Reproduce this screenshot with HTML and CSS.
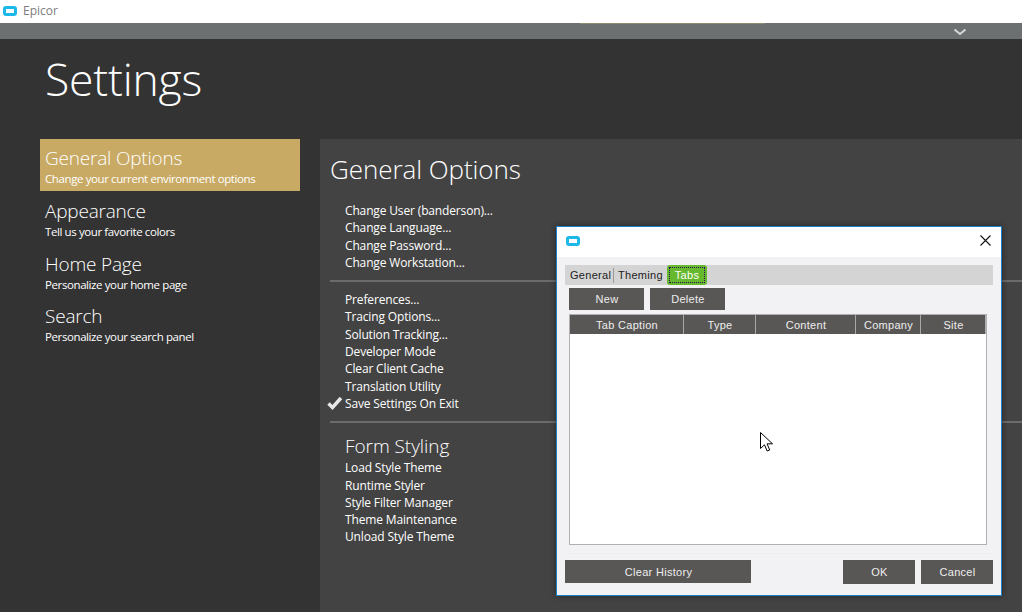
FILE: index.html
```html
<!DOCTYPE html>
<html lang="en">
<head>
<meta charset="utf-8">
<title>Epicor</title>
<link rel="stylesheet" href="styles.css">
</head>
<body>
<div class="titlebar">
  <svg class="app-icon" width="14" height="10" viewBox="0 0 14 10"><rect x="1.5" y="1.5" width="11" height="7" rx="1.5" fill="#fff" stroke="#1cb8ea" stroke-width="3"/></svg>
  <span class="app-name">Epicor</span>
</div>
<div class="ribbon">
  <div class="ribbon-accent"></div>
  <svg class="chevron" width="14" height="8" viewBox="0 0 14 8"><path d="M1.5 1.5 7 6l5.5-4.5" fill="none" stroke="#d6d8d8" stroke-width="2"/></svg>
</div>
<div class="page">
  <h1 class="page-title">Settings</h1>
  <div class="columns">
    <nav class="sidebar">
      <div class="nav-item active"><div class="nav-title">General Options</div><div class="nav-sub">Change your current environment options</div></div>
      <div class="nav-item"><div class="nav-title">Appearance</div><div class="nav-sub">Tell us your favorite colors</div></div>
      <div class="nav-item"><div class="nav-title">Home Page</div><div class="nav-sub">Personalize your home page</div></div>
      <div class="nav-item"><div class="nav-title">Search</div><div class="nav-sub">Personalize your search panel</div></div>
    </nav>
    <main class="panel">
      <h2 class="panel-title">General Options</h2>
      <ul class="links">
        <li>Change User (banderson)...</li>
        <li>Change Language...</li>
        <li>Change Password...</li>
        <li>Change Workstation...</li>
      </ul>
      <div class="divider"></div>
      <ul class="links">
        <li>Preferences...</li>
        <li>Tracing Options...</li>
        <li>Solution Tracking...</li>
        <li>Developer Mode</li>
        <li>Clear Client Cache</li>
        <li>Translation Utility</li>
        <li class="checked"><svg class="check" width="16" height="14" viewBox="0 0 16 14"><path d="M1.5 7.5 5.5 11.5 14 2" fill="none" stroke="#e8e8e8" stroke-width="3.4"/></svg>Save Settings On Exit</li>
      </ul>
      <div class="divider"></div>
      <h3 class="section-title">Form Styling</h3>
      <ul class="links">
        <li>Load Style Theme</li>
        <li>Runtime Styler</li>
        <li>Style Filter Manager</li>
        <li>Theme Maintenance</li>
        <li>Unload Style Theme</li>
      </ul>
    </main>
  </div>
</div>

<section class="dialog">
  <header class="dialog-head">
    <svg width="14" height="10" viewBox="0 0 14 10"><rect x="1.5" y="1.5" width="11" height="7" rx="1.5" fill="#fff" stroke="#1cb8ea" stroke-width="3"/></svg>
    <svg class="close" width="11" height="11" viewBox="0 0 11 11"><path d="M.5.5l10 10M10.5.5l-10 10" stroke="#111" stroke-width="1.1" fill="none"/></svg>
  </header>
  <div class="dialog-body">
    <div class="tabs">
      <span class="tab sep">General</span>
      <span class="tab middle">Theming</span>
      <span class="tab current"><span class="tab-focus">Tabs</span></span>
    </div>
    <div class="toolbar">
      <button class="btn btn-small">New</button>
      <button class="btn btn-small">Delete</button>
    </div>
    <div class="grid">
      <div class="grid-head">
        <span class="col c1">Tab Caption</span>
        <span class="col c2">Type</span>
        <span class="col c3">Content</span>
        <span class="col c4">Company</span>
        <span class="col c5">Site</span>
      </div>
      <div class="grid-rows"></div>
    </div>
    <div class="inner-rule"></div>
    <div class="actions">
      <button class="btn btn-clear">Clear History</button>
      <div class="actions-right">
        <button class="btn btn-action">OK</button>
        <button class="btn btn-action">Cancel</button>
      </div>
    </div>
  </div>
</section>

<svg class="cursor" width="14" height="22" viewBox="0 0 14 22"><path d="M.5.5v16l4-3.7 2.6 6.2 2.6-1-2.6-6.2h5.4z" fill="#fff" stroke="#000" stroke-width="1"/></svg>
</body>
</html>
```
FILE: styles.css
```css
* { box-sizing: border-box; }
html, body { margin: 0; height: 100%; }
body {
  width: 1022px;
  height: 612px;
  overflow: hidden;
  background: #333;
  color: #fff;
  font-family: "Open Sans", "Noto Sans", sans-serif;
  display: flex;
  flex-direction: column;
  position: relative;
}
ul { list-style: none; margin: 0; padding: 0; }
h1, h2, h3 { margin: 0; font-weight: 300; }

.titlebar {
  height: 23px;
  background: #fff;
  display: flex;
  align-items: center;
  padding: 0 0 0 3px;
  gap: 6px;
  flex: none;
}
.app-icon { margin-top: -2px; }
.app-name { color: #7d7d7d; font-size: 12px; margin-top: -2px; }

.ribbon {
  height: 16px;
  background: #6c7070;
  flex: none;
  position: relative;
}
.ribbon-accent { height: 1px; width: 185px; margin-left: 580px; background: #8d8a70; }
.chevron { position: absolute; left: 953px; top: 5px; }

.page { flex: 1; display: flex; flex-direction: column; min-height: 0; }
.page-title {
  font-size: 44.5px;
  line-height: 62px;
  height: 100px;
  padding: 9px 0 0 45px;
  letter-spacing: -0.2px;
}
.columns { flex: 1; display: flex; gap: 20px; padding-left: 40px; min-height: 0; }

.sidebar { width: 260px; flex: none; }
.nav-item { height: 52.6px; padding: 7px 0 0 5px; }
.nav-item.active { height: 52px; background: #c8aa64; margin-bottom: 1px; }
.nav-title { font-size: 19px; line-height: 24px; font-weight: 300; letter-spacing: -0.2px; }
.nav-sub { font-size: 11.5px; line-height: 17px; letter-spacing: -0.4px; }

.panel { flex: 1; background: #434343; padding: 0 0 0 10px; min-width: 0; }
.panel-title { font-size: 26px; line-height: 36px; padding-top: 12px; height: 63px; letter-spacing: -0.07px; }
.links { padding-left: 15px; }
.links li { font-size: 12px; line-height: 17.3px; height: 17.3px; letter-spacing: -0.15px; position: relative; white-space: nowrap; }
.check { position: absolute; left: -18px; top: 1px; }
.divider { height: 2px; background: #6b6b6b; margin: 9px 0 9px; }
.section-title { font-size: 19px; line-height: 25px; padding: 2px 0 0 15px; letter-spacing: -0.05px; }

.dialog {
  position: absolute;
  left: 556px;
  top: 226px;
  width: 446px;
  height: 370px;
  background: #f2f2f5;
  border: 1px solid #1b7fcc;
  box-shadow: 0 0 6px rgba(0,0,0,.45);
  display: flex;
  flex-direction: column;
  color: #eee;
  font-family: "Liberation Sans", Arial, sans-serif;
  font-size: 11px;
  letter-spacing: .3px;
}
.dialog-head {
  height: 30px;
  background: #fff;
  flex: none;
  display: flex;
  align-items: center;
  justify-content: space-between;
  padding: 0 10px 3px 9px;
}
.dialog-body { flex: 1; padding: 8px 8px 0; display: flex; flex-direction: column; }

.tabs {
  height: 20px;
  background: #d4d4d4;
  display: flex;
  align-items: center;
  color: #222;
  flex: none;
}
.tab { padding: 0 0 0 5px; line-height: 15px; }
.tab.sep { border-right: 1px solid #999; width: 49px; }
.tab.middle { width: 53px; padding-left: 4px; }
.tab.current {
  background: #66b82c;
  color: #fff;
  height: 20px;
  width: 40px;
  padding: 2px;
  border-radius: 3px;
  display: flex;
}
.tab-focus { flex: 1; border: 1px dotted #2a0a5c; text-align: center; line-height: 14px; }

.toolbar { display: flex; gap: 6px; padding: 3px 0 0 4px; flex: none; }
.btn {
  border: 0;
  background: #595755;
  color: #eee;
  font: inherit;
  letter-spacing: inherit;
  padding: 0 0 0 1px;
  display: block;
}
.btn-small { width: 75px; height: 22px; }

.grid {
  margin: 4px 6px 0 4px;
  height: 231px;
  border: 1px solid #b0b0b0;
  display: flex;
  flex-direction: column;
  flex: none;
}
.grid-head { display: flex; height: 19px; background: #595755; flex: none; border-right: 1px solid #b0b0b0; }
.col { border-right: 1px solid #a8a8a8; text-align: center; line-height: 20px; padding-left: 1px; }
.col:last-child { border-right: 0; flex: 1; }
.c1 { width: 114px; }
.c2 { width: 72px; }
.c3 { width: 100px; }
.c4 { width: 65px; }
.grid-rows { flex: 1; background: #fff; }

.inner-rule { height: 1px; background: #eeeef1; margin-top: 8px; flex: none; }
.actions { display: flex; justify-content: space-between; margin-top: 6px; flex: none; }
.actions-right { display: flex; gap: 6px; }
.btn-clear { width: 186px; height: 23px; }
.btn-action { width: 72px; height: 24px; }

.cursor { position: absolute; left: 760px; top: 432px; }
```
